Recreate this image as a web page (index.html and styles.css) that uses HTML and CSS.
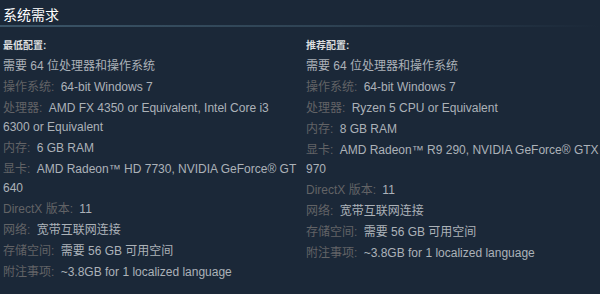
FILE: index.html
```html
<!DOCTYPE html>
<html lang="zh-CN">
<head>
<meta charset="utf-8">
<link rel="stylesheet" href="styles.css">
</head>
<body>
<div class="page">
  <h2 class="title">系统需求</h2>
  <div class="sep"></div>
  <div class="cols">
    <div class="col">
      <div class="head">最低配置:</div>
      <ul class="list">
        <li>需要 64 位处理器和操作系统</li>
        <li><span class="k">操作系统:</span> 64-bit Windows 7</li>
        <li><span class="k">处理器:</span> AMD FX 4350 or Equivalent, Intel Core i3 6300 or Equivalent</li>
        <li><span class="k">内存:</span> 6 GB RAM</li>
        <li><span class="k">显卡:</span> AMD Radeon™ HD 7730, NVIDIA GeForce® GT 640</li>
        <li><span class="k">DirectX 版本:</span> 11</li>
        <li><span class="k">网络:</span> 宽带互联网连接</li>
        <li><span class="k">存储空间:</span> 需要 56 GB 可用空间</li>
        <li><span class="k">附注事项:</span> ~3.8GB for 1 localized language</li>
      </ul>
    </div>
    <div class="col">
      <div class="head">推荐配置:</div>
      <ul class="list">
        <li>需要 64 位处理器和操作系统</li>
        <li><span class="k">操作系统:</span> 64-bit Windows 7</li>
        <li><span class="k">处理器:</span> Ryzen 5 CPU or Equivalent</li>
        <li><span class="k">内存:</span> 8 GB RAM</li>
        <li><span class="k">显卡:</span> AMD Radeon™ R9 290, NVIDIA GeForce® GTX 970</li>
        <li><span class="k">DirectX 版本:</span> 11</li>
        <li><span class="k">网络:</span> 宽带互联网连接</li>
        <li><span class="k">存储空间:</span> 需要 56 GB 可用空间</li>
        <li><span class="k">附注事项:</span> ~3.8GB for 1 localized language</li>
      </ul>
    </div>
  </div>
</div>
</body>
</html>
```

FILE: styles.css
```css
html, body {
  margin: 0;
  padding: 0;
  background: #1b2838;
  width: 600px;
  height: 294px;
  overflow: hidden;
}
.page {
  padding: 6px 0 0 3px;
  font-family: "Liberation Sans", Arial, "Noto Sans CJK SC", sans-serif;
  color: #acb2b8;
}
.title {
  margin: 0;
  font-size: 14px;
  font-weight: normal;
  color: #ffffff;
  line-height: 18px;
  height: 19px;
}
.sep {
  height: 2px;
  margin-left: -3px;
  background: linear-gradient(to right, #3b5568 0%, #2e4253 55%, rgba(27,40,56,0) 100%);
}
.cols {
  display: grid;
  grid-template-columns: 294px 294px;
  column-gap: 9px;
  padding-top: 12px;
}
.head {
  font-size: 10px;
  font-weight: bold;
  color: #dcdedf;
  line-height: 14px;
  margin-bottom: 4px;
}
.list {
  list-style: none;
  margin: 0;
  padding: 0;
  font-size: 12px;
  line-height: 19px;
}
.list li {
  margin-bottom: 2px;
}
.k {
  color: #626366;
  margin-right: 3px;
}
```
